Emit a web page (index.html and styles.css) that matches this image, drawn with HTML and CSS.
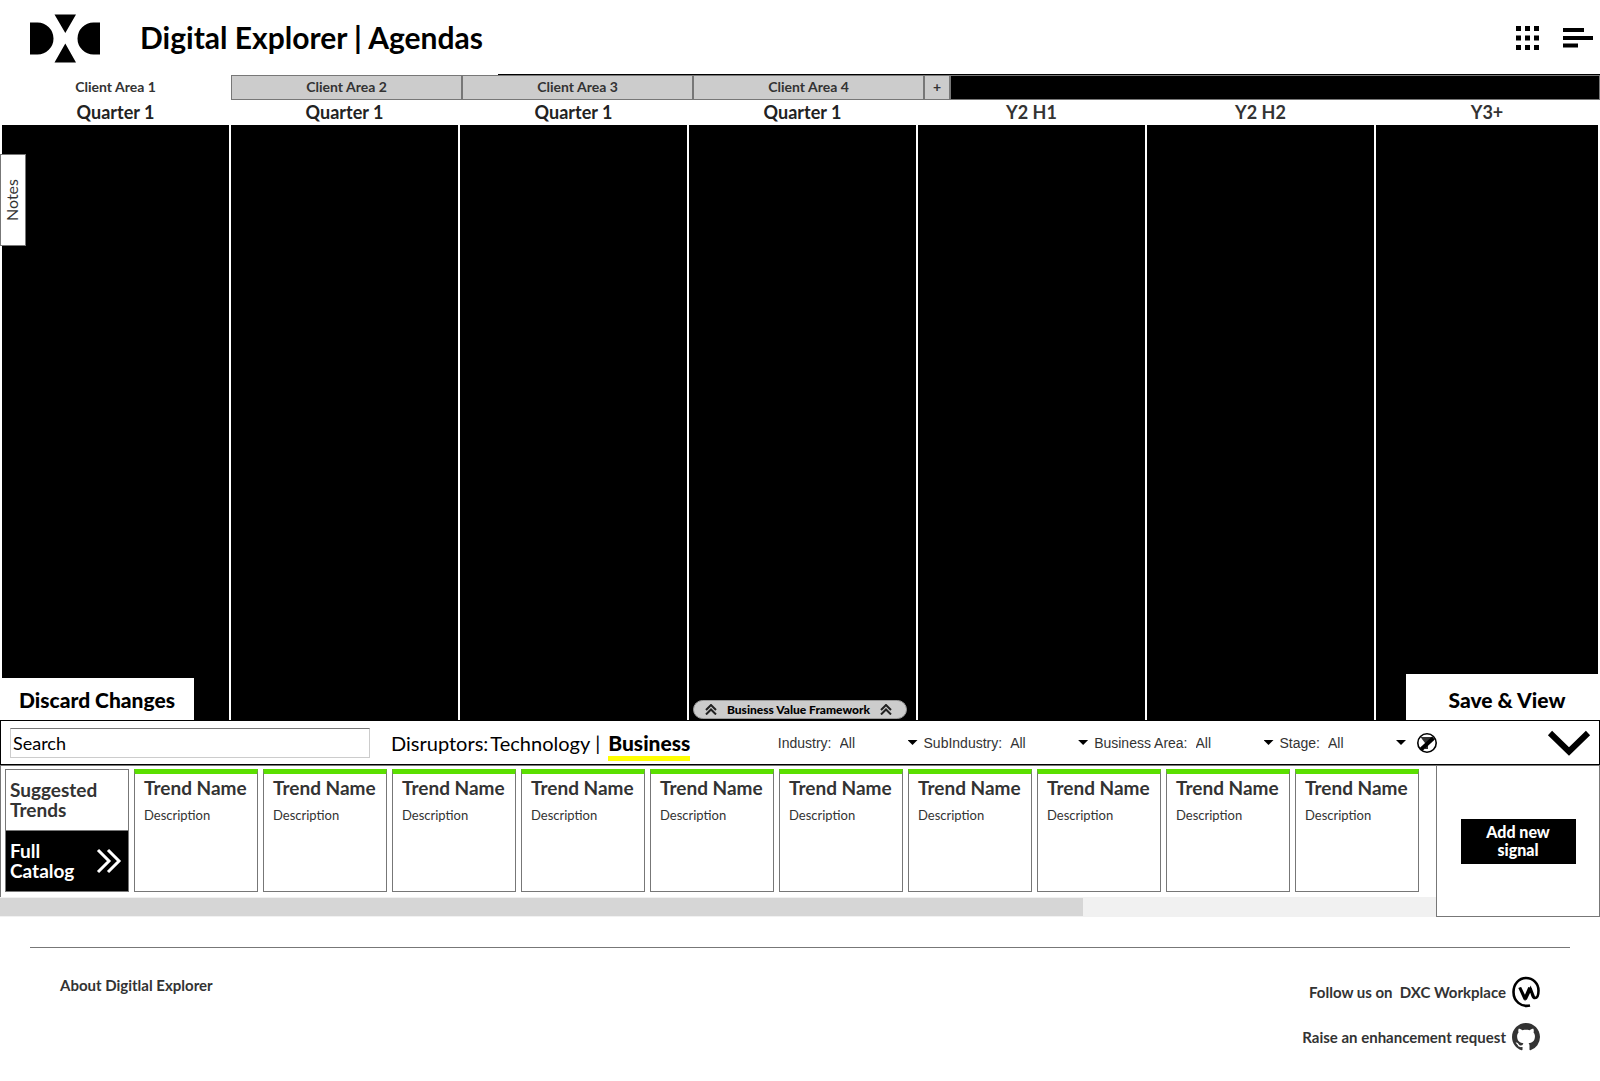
FILE: index.html
```html
<!DOCTYPE html>
<html lang="en">
<head>
<meta charset="utf-8">
<meta name="viewport" content="width=device-width, initial-scale=1">
<title>Digital Explorer | Agendas</title>
<link rel="stylesheet" href="styles.css">
</head>
<body>
<header class="header">
  <a class="logo" href="#" aria-label="DXC home">
    <svg width="70" height="49" viewBox="0 0 70 49"><path d="M0 8.500h7.500a16 16 0 0 1 0 32H0zM70 8.500h-6.500a16 16 0 0 0 0 32H70zM24.500 .5h21.500L35.300 19zM24.500 48.500h21.500L35.300 29.500z"/></svg>
  </a>
  <h1 class="title">Digital Explorer | Agendas</h1>
  <button class="icon-button" aria-label="Apps">
    <svg width="23" height="24" viewBox="0 0 23 24"><path d="M0 0h5v5H0zM9 0h5v5H9zM18 0h5v5h-5zM0 9.500h5v5H0zM9 9.500h5v5H9zM18 9.500h5v5h-5zM0 19h5v5H0zM9 19h5v5H9zM18 19h5v5h-5z"/></svg>
  </button>
  <button class="icon-button" aria-label="Menu">
    <svg width="30" height="20" viewBox="0 0 30 20"><path d="M0 0h21v4H0zM0 8h30v4H0zM0 15.500h15v4H0z"/></svg>
  </button>
</header>
<div class="header-rule"></div>

<main>
  <nav class="tabs">
    <button class="tab tab-active">Client Area 1</button>
    <button class="tab">Client Area 2</button>
    <button class="tab">Client Area 3</button>
    <button class="tab">Client Area 4</button>
    <button class="tab tab-add" aria-label="Add client area">+</button>
    <div class="tabs-rest"></div>
  </nav>

  <section class="board">
    <div class="lane"><h2 class="lane-title">Quarter 1</h2><div class="lane-body"></div></div>
    <div class="lane"><h2 class="lane-title">Quarter 1</h2><div class="lane-body"></div></div>
    <div class="lane"><h2 class="lane-title">Quarter 1</h2><div class="lane-body"></div></div>
    <div class="lane"><h2 class="lane-title">Quarter 1</h2><div class="lane-body"></div></div>
    <div class="lane"><h2 class="lane-title lane-later">Y2 H1</h2><div class="lane-body"></div></div>
    <div class="lane"><h2 class="lane-title lane-later">Y2 H2</h2><div class="lane-body"></div></div>
    <div class="lane"><h2 class="lane-title lane-later">Y3+</h2><div class="lane-body"></div></div>
    <button class="notes">Notes</button>
    <button class="board-action discard">Discard Changes</button>
    <button class="board-action save">Save &amp; View</button>
    <button class="framework">
      <svg class="up" width="12" height="11" viewBox="0 0 12 11"><path d="M1 6l5-5 5 5M1 10.500l5-5 5 5"/></svg>
      Business Value Framework
      <svg class="up" width="12" height="11" viewBox="0 0 12 11"><path d="M1 6l5-5 5 5M1 10.500l5-5 5 5"/></svg>
    </button>
  </section>

  <section class="filters">
    <input class="search" type="text" placeholder="Search" aria-label="Search">
    <div class="disruptors">
      <span>Disruptors:</span><a class="option" href="#">Technology</a><span class="bar">|</span><a class="current" href="#">Business</a>
    </div>
    <div class="selects">
      <label class="filter">Industry: <span class="pick"><select><option>All</option></select></span></label>
      <label class="filter">SubIndustry: <span class="pick"><select><option>All</option></select></span></label>
      <label class="filter">Business Area: <span class="pick"><select><option>All</option></select></span></label>
      <label class="filter">Stage: <span class="pick"><select><option>All</option></select></span></label>
    </div>
    <button class="icon-button clear" aria-label="Clear filters">
      <svg width="20" height="20" viewBox="0 0 20 20"><path d="M3.500 4h12l-4.500 6v6H8v-6z" fill="#333"/><path d="M4 16.500L16.500 5" stroke="#000" stroke-width="4"/><circle cx="10" cy="10" r="9.200" fill="none" stroke="#000" stroke-width="1.600"/></svg>
    </button>
    <button class="icon-button collapse" aria-label="Collapse">
      <svg width="44" height="26" viewBox="0 0 44 26"><path d="M3 3L22 21.500 41 3" fill="none" stroke="#000" stroke-width="6"/></svg>
    </button>
  </section>

  <section class="catalog">
    <div class="shelf">
      <div class="cards">
        <div class="switch">
          <button class="switch-item">Suggested Trends</button>
          <button class="switch-item switch-on"><span>Full<br>Catalog</span>
            <svg width="26" height="26" viewBox="0 0 26 26"><path d="M2 2l11 11L2 24M12 2l11 11-11 11" fill="none" stroke="#fff" stroke-width="3"/></svg>
          </button>
        </div>
        <article class="card"><h3>Trend Name</h3><p>Description</p></article>
        <article class="card"><h3>Trend Name</h3><p>Description</p></article>
        <article class="card"><h3>Trend Name</h3><p>Description</p></article>
        <article class="card"><h3>Trend Name</h3><p>Description</p></article>
        <article class="card"><h3>Trend Name</h3><p>Description</p></article>
        <article class="card"><h3>Trend Name</h3><p>Description</p></article>
        <article class="card"><h3>Trend Name</h3><p>Description</p></article>
        <article class="card"><h3>Trend Name</h3><p>Description</p></article>
        <article class="card"><h3>Trend Name</h3><p>Description</p></article>
        <article class="card"><h3>Trend Name</h3><p>Description</p></article>
      </div>
      <div class="scroll-track"><div class="scroll-thumb"></div></div>
    </div>
    <aside class="add-panel"><button class="add">Add new signal</button></aside>
  </section>
</main>

<footer class="footer">
  <a href="#">About Digitlal Explorer</a>
  <div class="social">
    <a href="#"><span>Follow us on&nbsp; DXC Workplace</span>
      <svg width="28" height="32" viewBox="0 0 28 32"><path d="M18 29.500C9 31.500 1.500 25 1.500 16 1.500 8 7 2 14 2s12.500 5.500 12.500 12.500c0 5-1.500 7.500-3.500 7.500-1.500 0-2-1-2.500-2.500L18.500 13l-4.500 9.500h-1.500L7.500 11.500M18.500 12.500l3.500 9M8 11.500l5 10.500 4.500-10.500" fill="none" stroke="#000" stroke-width="2.600"/></svg>
    </a>
    <a href="#"><span>Raise an enhancement request</span>
      <svg width="28" height="28" viewBox="0 0 16 16"><path fill="#333" d="M8 0C3.580 0 0 3.580 0 8c0 3.540 2.290 6.530 5.470 7.590.4.070.55-.17.55-.38 0-.19-.01-.82-.01-1.490-2.010.37-2.530-.49-2.690-.94-.09-.23-.48-.94-.82-1.130-.28-.15-.68-.52-.01-.53.63-.01 1.080.58 1.230.82.72 1.210 1.870.87 2.330.66.07-.52.28-.87.51-1.070-1.780-.2-3.640-.89-3.640-3.950 0-.87.31-1.590.82-2.150-.08-.2-.36-1.020.08-2.120 0 0 .67-.21 2.200.82.640-.18 1.320-.27 2-.27s1.360.09 2 .27c1.530-1.040 2.200-.82 2.200-.82.44 1.100.16 1.920.08 2.120.51.56.82 1.270.82 2.150 0 3.070-1.870 3.750-3.650 3.950.29.25.54.73.54 1.480 0 1.070-.01 1.930-.01 2.200 0 .21.15.46.55.38A8.010 8.010 0 0 0 16 8c0-4.420-3.580-8-8-8z"/></svg>
    </a>
  </div>
</footer>
</body>
</html>
```
FILE: styles.css
```css
* { box-sizing: border-box; }

body {
  margin: 0;
  background: #fff;
  color: #333;
  font-family: Lato, "Liberation Sans", sans-serif;
  font-size: 14px;
}

h1, h2, h3, p { margin: 0; }
svg { display: block; }
a { color: inherit; text-decoration: none; }

button {
  margin: 0;
  padding: 0;
  border: 0;
  background: none;
  color: inherit;
  font: inherit;
  cursor: pointer;
}

/* Header */
.header {
  display: flex;
  align-items: center;
  gap: 24px;
  height: 74px;
  padding: 2px 7px 0 30px;
}
.title {
  flex: 1;
  margin-left: 16px;
  color: #000;
  font-size: 30px;
  line-height: 36px;
  padding-bottom: 2px;
  font-weight: 700;
}
.header-rule {
  height: 1px;
  margin-left: 498px;
  background: #000;
}

/* Client tabs */
.tabs { display: flex; height: 25px; }
.tab {
  flex: 0 0 231px;
  padding-bottom: 2px;
  border: 1px solid #777;
  background: #ccc;
  font-weight: 700;
}
.tab-active { border-color: #fff; background: #fff; }
.tab-add { flex-basis: 26px; }
.tabs-rest {
  flex: 1;
  border: 1px solid #777;
  background: #000;
}

/* Board */
.board {
  position: relative;
  display: grid;
  grid-template-columns: repeat(6, 227fr) 222fr;
  column-gap: 2px;
  padding: 0 2px;
}
.lane-title {
  height: 25px;
  color: #222;
  font-size: 18px;
  line-height: 24px;
  font-weight: 700;
  text-align: center;
}
.lane-later { color: #333; }
.lane-body { height: 595px; background: #000; }

.notes {
  position: absolute;
  top: 54px;
  left: 0;
  width: 26px;
  height: 92px;
  padding-left: 3px;
  border: 1px solid #777;
  background: #fff;
  font-size: 16px;
  writing-mode: vertical-rl;
  transform: rotate(180deg);
}
.board-action {
  position: absolute;
  bottom: 0;
  background: #fff;
  color: #000;
  font-size: 21px;
  font-weight: 900;
}
.discard { left: 0; width: 194px; height: 42px; }
.save { right: 0; width: 194px; height: 46px; padding: 4px 0 0 8px; }
.framework {
  position: absolute;
  bottom: 1px;
  left: 693px;
  display: flex;
  align-items: center;
  justify-content: space-between;
  width: 214px;
  height: 19px;
  padding: 0 14px 0 11px;
  border: 1px solid #999;
  border-radius: 10px;
  background: #ccc;
  color: #000;
  font-size: 12px;
  font-weight: 900;
}
.up { fill: none; stroke: #222; stroke-width: 2px; }

/* Filter bar */
.filters {
  display: flex;
  align-items: center;
  height: 45px;
  padding: 0 8px 0 9px;
  border: 1px solid #000;
}
.search {
  flex: 0 0 360px;
  height: 30px;
  padding: 0 2px;
  border: 1px solid #ccc;
  border-top-color: #777;
  background: #fff;
  color: #000;
  font-family: inherit;
  font-size: 18px;
}
.search::placeholder { color: #000; opacity: 1; }
.disruptors {
  display: flex;
  margin-left: 21px;
  color: #000;
  font-size: 20px;
  line-height: 26px;
}
.option { margin-left: 2px; }
.bar { margin: 0 8px 0 5px; }
.current { font-size: 21px; font-weight: 900; box-shadow: 0 5px 0 #ff0; }
.selects {
  display: flex;
  gap: 6px;
  margin-left: auto;
  font-family: "Liberation Sans", Arial, sans-serif;
}
.filter { display: flex; align-items: center; gap: 8px; }
.pick { display: grid; align-items: center; width: 78px; }
.pick::after {
  content: "";
  grid-area: 1 / 1;
  justify-self: end;
  width: 10px;
  height: 5px;
  background: #000;
  clip-path: polygon(0 0, 100% 0, 50% 100%);
  pointer-events: none;
}
.pick select {
  grid-area: 1 / 1;
  margin: 0;
  padding: 0;
  border: 0;
  appearance: none;
  background: none;
  color: inherit;
  font: inherit;
}
.clear { margin-left: 11px; }
.collapse { margin-left: 110px; }

/* Catalog */
.catalog { display: flex; }
.shelf { flex: 1; min-width: 0; }
.cards {
  display: flex;
  gap: 5px;
  height: 132px;
  padding: 3px 5px 5px 4px;
  border-top: 1px solid #777;
  border-left: 1px solid #777;
  overflow: hidden;
}
.switch, .card {
  flex: 0 0 124px;
  border: 1px solid #777;
}
.switch { display: flex; flex-direction: column; }
.switch-item {
  display: flex;
  flex: 1;
  align-items: center;
  justify-content: space-between;
  padding: 0 6px 0 4px;
  font-size: 19px;
  line-height: 20px;
  font-weight: 700;
  text-align: left;
}
.switch-on { border-top: 1px solid #777; background: #000; color: #fff; }
.card {
  padding: 3px 0 0 9px;
  border-top: 5px solid #5bdf00;
}
.card h3 { font-size: 19px; line-height: 22px; white-space: nowrap; }
.card p { margin-top: 8px; font-size: 13px; line-height: 16px; }
.scroll-track { height: 20px; padding: 1px 0; background: #f1f1f1; }
.scroll-thumb { width: 75.4%; height: 18px; background: #d6d6d6; }
.add-panel {
  display: grid;
  place-items: center;
  width: 164px;
  border: 1px solid #777;
}
.add {
  width: 115px;
  height: 45px;
  padding: 0 20px;
  background: #000;
  color: #fff;
  font-size: 16px;
  line-height: 18px;
  font-weight: 900;
}

/* Footer */
.footer {
  display: flex;
  justify-content: space-between;
  margin: 30px 30px 0;
  padding: 28px 30px 28px;
  border-top: 1px solid #777;
  font-size: 15px;
  font-weight: 700;
  line-height: 18px;
}
.social {
  display: flex;
  flex-direction: column;
  align-items: flex-end;
  gap: 15px;
}
.social a { display: flex; align-items: center; gap: 6px; }
```
